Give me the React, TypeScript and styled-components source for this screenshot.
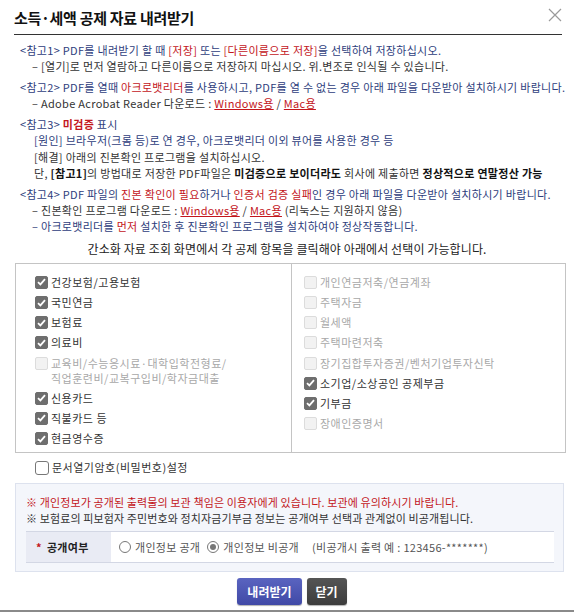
import { styled, createGlobalStyle } from "styled-components";

const Global = createGlobalStyle`
    body {
        margin: 0;
        background: #fff;
        font-family: "Noto Sans CJK KR", "Noto Sans", sans-serif;
    }
`

const Dialog = styled.div`
    width: 574px;
    height: 612px;
    box-sizing: border-box;
    display: flex;
    flex-direction: column;
    border-bottom: 2px solid #8a8a8a;
    overflow: hidden;
`

const Header = styled.div`
    display: flex;
    align-items: center;
    justify-content: space-between;
    height: 34px;
    margin: 0 12px 0 14px;
    border-bottom: 1px solid #333;
`

const Title = styled.h1`
    margin: 0;
    font-size: 15px;
    font-weight: 700;
    letter-spacing: -0.3px;
    color: #111;
`

const CloseBtn = styled.button`
    border: 0;
    background: none;
    padding: 0;
    width: 14px;
    height: 14px;
    margin-top: -5px;
    display: flex;
`

const Notes = styled.div`
    padding: 7px 0 0 20px;
    font-size: 11px;
    letter-spacing: 0.3px;
    line-height: 16.3px;
    color: #2e3d7c;
`

const Group = styled.div`
    margin-bottom: 4.5px;
`

const Line = styled.div<{ $indent?: number; $dark?: boolean }>`
    padding-left: ${p => p.$indent ?? 0}px;
    color: ${p => (p.$dark ? "#333" : "inherit")};
    white-space: nowrap;
`

const Red = styled.span`
    color: #c3161c;
`

const Strong = styled.b<{ $red?: boolean }>`
    font-weight: 700;
    color: ${p => (p.$red ? "#c3161c" : "#111")};
`

const Link = styled.a`
    color: #c3161c;
    text-decoration: underline;
`

const Guide = styled.p`
    margin: 2px 0 0;
    text-align: center;
    font-size: 12px;
    letter-spacing: 0.1px;
    color: #222;
    line-height: 16px;
`

const Panel = styled.div`
    margin: 6px 8px 0 15px;
    height: 190px;
    box-sizing: border-box;
    border: 1px solid #c4c4c4;
    display: grid;
    grid-template-columns: 275px 1fr;
`

const Column = styled.div<{ $right?: boolean }>`
    padding: 8px 0 0 ${p => (p.$right ? 12 : 19)}px;
    border-left: ${p => (p.$right ? "1px solid #c4c4c4" : "none")};
`

const Item = styled.label<{ $off?: boolean }>`
    display: flex;
    align-items: flex-start;
    gap: 3px;
    padding: 2.6px 0;
    font-size: 11px;
    line-height: 15px;
    letter-spacing: 0.5px;
    color: ${p => (p.$off ? "#a8a8a8" : "#333")};
`

const Lines = styled.span`
    display: flex;
    flex-direction: column;
`

const Box = styled.span<{ $on?: boolean; $off?: boolean }>`
    flex: none;
    width: 13px;
    height: 13px;
    margin-top: 1px;
    box-sizing: border-box;
    border-radius: 2px;
    display: flex;
    align-items: center;
    justify-content: center;
    background: ${p => (p.$on ? "#6e6e6e" : p.$off ? "#f2f2f2" : "#fff")};
    border: 1px solid ${p => (p.$on ? "#6e6e6e" : p.$off ? "#dcdcdc" : "#777")};
`

const PwRow = styled(Item)`
    padding: 7px 0 0 35px;
`

const PwBox = styled(Box)`
    width: 14px;
    height: 14px;
    border-radius: 3px;
`

const Info = styled.div`
    margin: 8px 10px 0 15px;
    height: 89px;
    box-sizing: border-box;
    background: #f4f6fb;
    border: 1px solid #dde2ee;
    padding: 10px 10px 0 10px;
    font-size: 11px;
    letter-spacing: 0.12px;
    line-height: 16px;
    color: #333;
`

const InfoLine = styled.div<{ $red?: boolean }>`
    color: ${p => (p.$red ? "#c3161c" : "#333")};
    white-space: nowrap;
`

const Row = styled.div`
    margin-top: 5px;
    display: grid;
    grid-template-columns: 85px 1fr;
    height: 32px;
    box-sizing: border-box;
    border-top: 1px solid #d3d7e4;
    border-bottom: 1px solid #d3d7e4;
    margin-right: -1px;
    letter-spacing: 0.3px;
`

const RowLabel = styled.div`
    background: #e9ebf4;
    display: flex;
    align-items: center;
    padding-left: 10px;
    font-weight: 700;
    font-size: 11px;
    color: #222;
    gap: 5px;
`

const RowValue = styled.div`
    background: #fff;
    display: flex;
    align-items: center;
    padding-left: 8px;
    font-size: 11px;
    color: #555;
    white-space: nowrap;
`

const Radio = styled.span<{ $on?: boolean }>`
    width: 12px;
    height: 12px;
    box-sizing: border-box;
    border-radius: 50%;
    border: 1px solid #777;
    background: #fff;
    display: inline-flex;
    align-items: center;
    justify-content: center;
    margin-right: 4px;
    &::after {
        content: "";
        width: 6px;
        height: 6px;
        border-radius: 50%;
        background: ${p => (p.$on ? "#777" : "transparent")};
    }
`

const RadioLabel = styled.span`
    display: inline-flex;
    align-items: center;
    margin-right: 7px;
`

const Hint = styled.span`
    margin-left: 6px;
    color: #555;
`

const Buttons = styled.div`
    display: flex;
    justify-content: center;
    gap: 5px;
    margin-top: 6px;
    padding-left: 10px;
`

const Button = styled.button<{ $dark?: boolean }>`
    height: 27px;
    padding: 0 ${p => (p.$dark ? 9 : 10)}px;
    border: 0;
    border-radius: 3px;
    font-family: inherit;
    font-size: 12px;
    font-weight: 700;
    color: #fff;
    background: ${p =>
        p.$dark
            ? "linear-gradient(#555, #3c3c3c)"
            : "linear-gradient(#5a64c0, #4049a6)"};
    box-shadow: 0 1px 1px rgba(0, 0, 0, 0.3);
`

const Check = () => (
    <svg width="9" height="8" viewBox="0 0 9 8">
        <path d="M1 4.2 L3.4 6.4 L8 1.2" fill="none" stroke="#fff" strokeWidth="1.8" />
    </svg>
)

type Opt = { label: string[]; on?: boolean; off?: boolean };

const left: Opt[] = [
    { label: ["건강보험/고용보험"], on: true },
    { label: ["국민연금"], on: true },
    { label: ["보험료"], on: true },
    { label: ["의료비"], on: true },
    { label: ["교육비/수능응시료·대학입학전형료/", "직업훈련비/교복구입비/학자금대출"], off: true },
    { label: ["신용카드"], on: true },
    { label: ["직불카드 등"], on: true },
    { label: ["현금영수증"], on: true },
];

const right: Opt[] = [
    { label: ["개인연금저축/연금계좌"], off: true },
    { label: ["주택자금"], off: true },
    { label: ["월세액"], off: true },
    { label: ["주택마련저축"], off: true },
    { label: ["장기집합투자증권/벤처기업투자신탁"], off: true },
    { label: ["소기업/소상공인 공제부금"], on: true },
    { label: ["기부금"], on: true },
    { label: ["장애인증명서"], off: true },
];

function Options({ list }: { list: Opt[] }) {
    return (
        <>
            {list.map(o => (
                <Item key={o.label[0]} $off={o.off}>
                    <Box $on={o.on} $off={o.off}>{o.on && <Check />}</Box>
                    <Lines>
                        {o.label.map(l => <span key={l}>{l}</span>)}
                    </Lines>
                </Item>
            ))}
        </>
    );
}

export default function App() {
    return (
        <Dialog>
            <Global />
            <Header>
                <Title>소득·세액 공제 자료 내려받기</Title>
                <CloseBtn aria-label="닫기">
                    <svg width="14" height="14" viewBox="0 0 14 14">
                        <path d="M1 1 L13 13 M13 1 L1 13" stroke="#9a9a9a" strokeWidth="1.2" />
                    </svg>
                </CloseBtn>
            </Header>

            <Notes>
                <Group>
                    <Line>&lt;참고1&gt; PDF를 내려받기 할 때 <Red>[저장]</Red> 또는 <Red>[다른이름으로 저장]</Red>을 선택하여 저장하십시오.</Line>
                    <Line $indent={12} $dark>– [열기]로 먼저 열람하고 다른이름으로 저장하지 마십시오. 위.변조로 인식될 수 있습니다.</Line>
                </Group>
                <Group>
                    <Line>&lt;참고2&gt; PDF를 열때 <Red>아크로뱃리더</Red>를 사용하시고, PDF를 열 수 없는 경우 아래 파일을 다운받아 설치하시기 바랍니다.</Line>
                    <Line $indent={12} $dark>– Adobe Acrobat Reader 다운로드 : <Link>Windows용</Link> / <Link>Mac용</Link></Line>
                </Group>
                <Group>
                    <Line>&lt;참고3&gt; <Strong $red>미검증</Strong> 표시</Line>
                    <Line $indent={14}>[원인] 브라우저(크롬 등)로 연 경우, 아크로뱃리더 이외 뷰어를 사용한 경우 등</Line>
                    <Line $indent={14} $dark>[해결] 아래의 진본확인 프로그램을 설치하십시오.</Line>
                    <Line $indent={14} $dark>단, <Strong>[참고1]</Strong>의 방법대로 저장한 PDF파일은 <Strong>미검증으로 보이더라도</Strong> 회사에 제출하면 <Strong>정상적으로 연말정산 가능</Strong></Line>
                </Group>
                <Group>
                    <Line>&lt;참고4&gt; PDF 파일의 <Red>진본 확인이 필요</Red>하거나 <Red>인증서 검증 실패</Red>인 경우 아래 파일을 다운받아 설치하시기 바랍니다.</Line>
                    <Line $indent={12} $dark>– 진본확인 프로그램 다운로드 : <Link>Windows용</Link> / <Link>Mac용</Link> (리눅스는 지원하지 않음)</Line>
                    <Line $indent={12}>– 아크로뱃리더를 <Red>먼저</Red> 설치한 후 진본확인 프로그램을 설치하여야 정상작동합니다.</Line>
                </Group>
            </Notes>

            <Guide>간소화 자료 조회 화면에서 각 공제 항목을 클릭해야 아래에서 선택이 가능합니다.</Guide>

            <Panel>
                <Column>
                    <Options list={left} />
                </Column>
                <Column $right>
                    <Options list={right} />
                </Column>
            </Panel>

            <PwRow>
                <PwBox />
                <span>문서열기암호(비밀번호)설정</span>
            </PwRow>

            <Info>
                <InfoLine $red>※ 개인정보가 공개된 출력물의 보관 책임은 이용자에게 있습니다. 보관에 유의하시기 바랍니다.</InfoLine>
                <InfoLine>※ 보험료의 피보험자 주민번호와 정치자금기부금 정보는 공개여부 선택과 관계없이 비공개됩니다.</InfoLine>
                <Row>
                    <RowLabel><Red>*</Red>공개여부</RowLabel>
                    <RowValue>
                        <RadioLabel><Radio />개인정보 공개</RadioLabel>
                        <RadioLabel><Radio $on />개인정보 비공개</RadioLabel>
                        <Hint>(비공개시 출력 예 : 123456-*******)</Hint>
                    </RowValue>
                </Row>
            </Info>

            <Buttons>
                <Button>내려받기</Button>
                <Button $dark>닫기</Button>
            </Buttons>
        </Dialog>
    );
}
